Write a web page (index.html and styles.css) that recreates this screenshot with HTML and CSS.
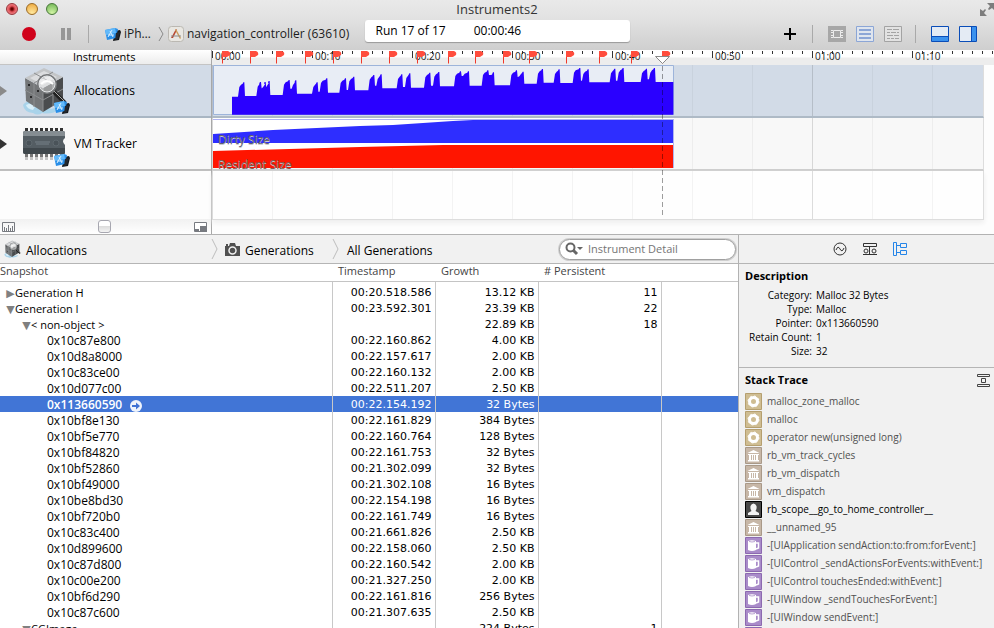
FILE: index.html
```
<!DOCTYPE html>
<html lang="en">
<head>
<meta charset="utf-8">
<title>Instruments2</title>
<link rel="stylesheet" href="styles.css">
</head>
<body>
<svg class="defs" aria-hidden="true">
  <defs>
    <symbol id="phone" viewBox="0 0 16 14">
      <path d="M10 4l5-1 1 2-2 8-6 1z" fill="#15181c"/>
      <path d="M0 3l10-2 3 1-2 9-9 2z" fill="#2a8fe8"/>
      <path d="M0 3l10-2 1 5-10 2z" fill="#62b9fa"/>
      <path d="M3 10l4-7M5 4l3 6M3 8h6" stroke="#d7efff" fill="none"/>
      <path d="M11 6l4-1-2 7-3 1z" fill="#24282e"/>
    </symbol>
    <symbol id="cube" viewBox="0 0 48 48">
      <path d="M1 38q4-5 12-4l16 8q8-3 9 0-8 6-18 4-4 3-9 0-9-1-10-8z" fill="#a9d3ea"/>
      <path d="M4 38q5-3 10 0l-3 5q-6-1-7-5z" fill="#d9eff9"/>
      <path d="M3 11L21 21V45L4 34z" fill="#747678"/>
      <path d="M21 21L41 10V33L21 45z" fill="#4a4c4e"/>
      <path d="M3 11L22 1 41 10 21 21z" fill="#c3c5c7"/>
      <path d="M8 11l14-7 13 6-14 8z" fill="#dcdddf"/>
      <path d="M12 6l18 10M31 5L12 16M3 23l18 10 20-11M12 16v24M31 15v24M21 21v24" stroke="#8c8e90" fill="none"/>
      <circle cx="7" cy="18" r="1" fill="#111"/><circle cx="9" cy="30" r="1" fill="#111"/><circle cx="16" cy="24" r="1" fill="#111"/>
      <path d="M32 25l11 11" stroke="#222" stroke-width="4"/>
      <path d="M32 24l10 10" stroke="#aaa" stroke-width="1"/>
      <circle cx="25" cy="17" r="9" fill="#fff" fill-opacity=".45" stroke="#77797b" stroke-width="2"/>
      <circle cx="25" cy="17" r="8" fill="none" stroke="#e4e6e8" stroke-width="1"/>
      <path d="M19 17q6-6 12 0" stroke="#fff" stroke-width="2" fill="none"/>
    </symbol>
    <symbol id="chip" viewBox="0 0 44 34">
      <path d="M3 31h37" stroke="#c4c4c4" stroke-width="4" stroke-dasharray="3 2"/>
      <path d="M3 3h38" stroke="#333" stroke-width="4" stroke-dasharray="3 2"/>
      <path d="M3 28h38" stroke="#777" stroke-width="4" stroke-dasharray="3 2"/>
      <path d="M3 4h38q2 0 2 2v5q-4 3 0 7v8q0 1-2 1H3q-2 0-2-2V6q0-2 2-2z" fill="#545d63"/>
      <path d="M3 4h38q2 0 2 2v3H1V6q0-2 2-2z" fill="#858d92"/>
      <path d="M1 21h42v5q0 1-2 1H3q-2 0-2-2z" fill="#3f474c"/>
      <circle cx="7" cy="16" r="3" fill="#4a5359" stroke="#5f696f"/>
      <circle cx="34" cy="16" r="3" fill="#4a5359" stroke="#5f696f"/>
      <path d="M13 15h15M14 17h13" stroke="#77828a"/>
    </symbol>
    <symbol id="gear" viewBox="0 0 17 17">
      <path d="M.5.5h16v16H.5z" fill="#cfbd92" stroke="#b59f6f"/>
      <circle cx="8.500" cy="8.500" r="4" fill="none" stroke="#fff" stroke-width="3"/>
      <circle cx="8.500" cy="8.500" r="5.500" fill="none" stroke="#fff" stroke-width="1" stroke-dasharray="2 2.300"/>
    </symbol>
    <symbol id="bank" viewBox="0 0 17 17">
      <path d="M.5.5h16v16H.5z" fill="#c7b7a7" stroke="#a99988"/>
      <path d="M2.500 6L8.500 3l6 3zM3 7h11v1H3zM4 8h2v5H4zM7 8h1v5H7zM9 8h1v5H9zM11 8h2v5h-2zM3 13h11v1.500H3z" fill="#fff"/>
    </symbol>
    <symbol id="person" viewBox="0 0 17 17">
      <path d="M.5.5h16v16H.5z" fill="#484848" stroke="#000"/>
      <path d="M3 14v-2l3.500-2Q5 8 5.500 5q1-2.500 3-2.500t3 2.500q.5 3-1 5l3.500 2v2z" fill="#f2f2f2"/>
    </symbol>
    <symbol id="mug" viewBox="0 0 17 17">
      <path d="M.5.5h16v16H.5z" fill="#a98bc9" stroke="#8c69b0"/>
      <path d="M3 4q4-1.500 8 0v9q-4 2-8 0z" fill="#fff"/>
      <path d="M11 6h2.500v5L11 12" fill="none" stroke="#fff" stroke-width="1.500"/>
      <path d="M4 4.500q3 1 6 0" stroke="#bba5d3" fill="none"/>
    </symbol>
  </defs>
</svg>

<header class="titlebar">
  <div class="lights">
    <button class="light close" aria-label="Close"></button>
    <button class="light mini" aria-label="Minimize"></button>
    <button class="light zoom" aria-label="Zoom"></button>
  </div>
  <h1>Instruments2</h1>
  <button class="full" aria-label="Full screen"><svg width="14" height="15" viewBox="0 0 14 15"><path d="M7 1h7v7l-2-2-3 2-1-1 2-3zM0 7l3 2 2-2 1 1-2 3 3 3H0z" fill="#7d7d7d"/></svg></button>
</header>

<div class="toolbar">
  <div class="tools-left">
    <button aria-label="Record" class="record"></button>
    <button aria-label="Pause" class="pause"></button>
    <span class="divider"></span>
    <button class="target"><svg width="16" height="14"><use href="#phone"/></svg>iPh…</button>
    <svg class="chev" width="6" height="16" viewBox="0 0 6 16"><path d="M1 1l4 7-4 7" fill="none" stroke="#8a8a8a"/></svg>
    <button class="target"><svg width="16" height="16" viewBox="0 0 16 16"><rect x=".5" y=".5" width="15" height="15" rx="3" fill="#e9e7e2" stroke="#bbb8b2"/><path d="M3 12L8 3l1 1-4 8z" fill="#b8452f"/><path d="M8 3l5 9-1 1-5-9z" fill="#c99c5a"/><path d="M3 10h10" stroke="#8d8d8d"/></svg>navigation_controller (63610)</button>
  </div>
  <div class="status"><span>Run 17 of 17</span><span>00:00:46</span></div>
  <div class="tools-right">
    <button class="add" aria-label="Add instrument"><svg width="12" height="12" viewBox="0 0 12 12"><path d="M6 0v12M0 6h12" stroke="#000" stroke-width="2"/></svg></button>
    <span class="divider"></span>
    <button aria-label="CPU strategy"><svg width="18" height="16" viewBox="0 0 18 16"><path d="M0 0h18v16H0z" fill="#a7a7a7"/><path d="M5.500 4.500h7v7h-7z" fill="#a7a7a7" stroke="#ececec"/><path d="M3 4.500h2M3 6.500h2M3 9.500h2M3 11.500h2M13 4.500h2M13 6.500h2M13 9.500h2M13 11.500h2" stroke="#ececec"/></svg></button>
    <button aria-label="Instruments strategy"><svg width="18" height="16" viewBox="0 0 18 16"><path d="M.5.5h17v15H.5z" fill="#dfe5ee" stroke="#8ca6d6"/><path d="M3 4h12M3 8h12M3 12h12" stroke="#8ca6d6" stroke-width="2"/></svg></button>
    <button aria-label="Threads strategy"><svg width="18" height="16" viewBox="0 0 18 16"><path d="M.5.5h17v15H.5z" fill="#e2e2e2" stroke="#a3a3a3"/><path d="M3 3.500h5m1 0h6M3 6.500h3m1 0h5m1 0h2M3 9.500h6m1 0h5M3 12.500h3m1 0h3m1 0h4" stroke="#a3a3a3"/></svg></button>
    <span class="divider"></span>
    <button aria-label="Detail pane"><svg width="18" height="16" viewBox="0 0 18 16"><path d="M.5.5h17v15H.5z" fill="#e4ebf4" stroke="#0a4db8"/><path d="M1 10h16v5H1z" fill="#3b92ee"/><path d="M1 10.500h16" stroke="#0a4db8"/></svg></button>
    <button aria-label="Extended detail"><svg width="18" height="16" viewBox="0 0 18 16"><path d="M.5.5h17v15H.5z" fill="#e4ebf4" stroke="#0a4db8"/><path d="M12 1h5v14h-5z" fill="#3b92ee"/><path d="M12.500 1v14" stroke="#0a4db8"/></svg></button>
  </div>
</div>

<section class="timeline">
  <div class="instruments">
    <div class="inst-head">Instruments</div>
    <div class="inst sel">
      <button class="disc" aria-label="Expand Allocations"></button>
      <span class="pic"><svg width="48" height="48"><use href="#cube"/></svg><svg class="badge" width="16" height="14"><use href="#phone"/></svg></span>
      <span>Allocations</span>
    </div>
    <div class="inst">
      <button class="disc dark" aria-label="Expand VM Tracker"></button>
      <span class="pic"><svg width="44" height="34"><use href="#chip"/></svg><svg class="badge" width="16" height="14"><use href="#phone"/></svg></span>
      <span>VM Tracker</span>
    </div>
    <div class="inst-foot">
      <button aria-label="Track scale"><svg width="13" height="10" viewBox="0 0 13 10"><path d="M.5.5h12v9H.5zM2.500 9V5M4.500 9V6M6.500 9V3M8.500 9V6M10.500 9V4" fill="none" stroke="#777a80"/></svg></button>
      <button class="knob" aria-label="Zoom slider"></button>
      <button aria-label="Snap"><svg width="13" height="10" viewBox="0 0 13 10"><path d="M.5.5h12v9H.5z" fill="#fff" stroke="#777a80"/><path d="M6 4h7v6H6zM1 7h4v3H1z" fill="#777a80"/></svg></button>
    </div>
  </div>
  <div class="tracks">
    <div class="ruler"><span>00:00</span><span>00:10</span><span>00:20</span><span>00:30</span><span>00:40</span><span>00:50</span><span>01:00</span><span>01:10</span></div>
    <div class="lane sel">
      <svg width="461" height="50" viewBox="0 0 461 50">
        <path d="M.5.5h460v49H.5z" fill="#e8edf5" stroke="#9db4da"/>
        <path id="heap" transform="translate(-213 -65) scale(.33333)" fill="#2a00ff"/>
      </svg>
    </div>
    <div class="lane vm">
      <svg width="461" height="50" viewBox="0 0 461 50">
        <path d="M0 0h461v50H0z" fill="#fff"/>
        <path d="M0 16L60 12 147 8 180 7 240 3 260 2H461V25H0z" fill="#2e2eff"/>
        <path d="M0 33L147 29 230 27H461V50H0z" fill="#ff1500"/>
        <path d="M0 1.500h461M460.500 1v49" stroke="#b0b4f0" fill="none"/>
      </svg>
      <span class="tag dirty">Dirty Size</span><span class="tag resident">Resident Size</span>
    </div>
    <div class="lane blank"></div>
    <svg class="marks" width="470" height="170" viewBox="0 0 470 170">
      <g id="flags" stroke="#f0392b" fill="#ff4d3d"></g>
      <path d="M450.500 16v150" stroke="#000" stroke-opacity=".38" stroke-dasharray="5 3"/>
      <path d="M443.500 6.500h14l-7 7z" fill="#fff" stroke="#888"/>
    </svg>
  </div>
</section>

<main>
  <section class="detail">
    <nav class="crumbs">
      <a href="#" class="c1"><svg width="18" height="18"><use href="#cube"/></svg><span>Allocations</span></a>
      <svg class="sep" width="7" height="20" viewBox="0 0 7 20"><path d="M1 0l5 10-5 10" fill="none" stroke="#bdbdbd"/></svg>
      <a href="#" class="c2"><svg width="15" height="13" viewBox="0 0 15 13"><path d="M0 3h1V1h2v2h1l1-3h5l1 3h4v10H0z" fill="#505050"/><circle cx="7.500" cy="7.500" r="3.500" fill="#505050" stroke="#f1f1f1" stroke-width="1.500"/></svg><span>Generations</span></a>
      <svg class="sep" width="7" height="20" viewBox="0 0 7 20"><path d="M1 0l5 10-5 10" fill="none" stroke="#bdbdbd"/></svg>
      <a href="#" class="c3"><span>All Generations</span></a>
      <label class="search"><svg width="18" height="14" viewBox="0 0 18 14"><circle cx="5.500" cy="5.500" r="4" fill="none" stroke="#666" stroke-width="2"/><path d="M8 8l4 4" stroke="#666" stroke-width="3"/><path d="M12 5h6l-3 3z" fill="#666"/></svg><input type="search" placeholder="Instrument Detail" aria-label="Instrument Detail"></label>
    </nav>
    <table>
      <colgroup><col class="w1"><col class="w2"><col class="w2"><col class="w3"><col></colgroup>
      <thead><tr><th>Snapshot</th><th>Timestamp</th><th>Growth</th><th># Persistent</th><th></th></tr></thead>
      <tbody>
        <tr class="gap"><td></td><td></td><td></td><td></td><td></td></tr>
        <tr><td class="g"><button class="tri">▶</button>Generation H</td><td>00:20.518.586</td><td>13.12 KB</td><td>11</td><td></td></tr>
        <tr><td class="g"><button class="tri">▼</button>Generation I</td><td>00:23.592.301</td><td>23.39 KB</td><td>22</td><td></td></tr>
        <tr><td class="g in"><button class="tri">▼</button>&lt; non-object &gt;</td><td></td><td>22.89 KB</td><td>18</td><td></td></tr>
        <tr><td>0x10c87e800</td><td>00:22.160.862</td><td>4.00 KB</td><td></td><td></td></tr>
        <tr><td>0x10d8a8000</td><td>00:22.157.617</td><td>2.00 KB</td><td></td><td></td></tr>
        <tr><td>0x10c83ce00</td><td>00:22.160.132</td><td>2.00 KB</td><td></td><td></td></tr>
        <tr><td>0x10d077c00</td><td>00:22.511.207</td><td>2.50 KB</td><td></td><td></td></tr>
        <tr class="on"><td>0x113660590<a href="#" class="go" aria-label="Show details"><svg width="12" height="12" viewBox="0 0 12 12"><circle cx="6" cy="6" r="6" fill="#eef3fb"/><path d="M2 5h4V2.500L10 6 6 9.500V7H2z" fill="#3f72d4"/></svg></a></td><td>00:22.154.192</td><td>32 Bytes</td><td></td><td></td></tr>
        <tr><td>0x10bf8e130</td><td>00:22.161.829</td><td>384 Bytes</td><td></td><td></td></tr>
        <tr><td>0x10bf5e770</td><td>00:22.160.764</td><td>128 Bytes</td><td></td><td></td></tr>
        <tr><td>0x10bf84820</td><td>00:22.161.753</td><td>32 Bytes</td><td></td><td></td></tr>
        <tr><td>0x10bf52860</td><td>00:21.302.099</td><td>32 Bytes</td><td></td><td></td></tr>
        <tr><td>0x10bf49000</td><td>00:21.302.108</td><td>16 Bytes</td><td></td><td></td></tr>
        <tr><td>0x10be8bd30</td><td>00:22.154.198</td><td>16 Bytes</td><td></td><td></td></tr>
        <tr><td>0x10bf720b0</td><td>00:22.161.749</td><td>16 Bytes</td><td></td><td></td></tr>
        <tr><td>0x10c83c400</td><td>00:21.661.826</td><td>2.50 KB</td><td></td><td></td></tr>
        <tr><td>0x10d899600</td><td>00:22.158.060</td><td>2.50 KB</td><td></td><td></td></tr>
        <tr><td>0x10c87d800</td><td>00:22.160.542</td><td>2.00 KB</td><td></td><td></td></tr>
        <tr><td>0x10c00e200</td><td>00:21.327.250</td><td>2.00 KB</td><td></td><td></td></tr>
        <tr><td>0x10bf6d290</td><td>00:22.161.816</td><td>256 Bytes</td><td></td><td></td></tr>
        <tr><td>0x10c87c600</td><td>00:21.307.635</td><td>2.50 KB</td><td></td><td></td></tr>
        <tr><td class="g in"><button class="tri">▼</button>CGImage</td><td></td><td>224 Bytes</td><td>1</td><td></td></tr>
      </tbody>
    </table>
  </section>

  <aside>
    <div class="tabs">
      <button aria-label="Record settings"><svg width="14" height="14" viewBox="0 0 14 14"><circle cx="7" cy="7" r="6" fill="none" stroke="#333"/><path d="M3 8q2-5 4-1t4-1" fill="none" stroke="#333"/></svg></button>
      <button aria-label="Display settings"><svg width="14" height="14" viewBox="0 0 14 14"><path d="M.5 1.500h13v3H.5zM6.500 5v8M0 12.500h14" fill="none" stroke="#333"/><circle cx="3" cy="9" r="2" fill="none" stroke="#333"/><circle cx="11" cy="9" r="2" fill="none" stroke="#333"/></svg></button>
      <button aria-label="Extended detail"><svg width="14" height="14" viewBox="0 0 14 14"><path d="M.5.5h3v13h-3zM7.500 1.500h6v4h-6zM7.500 8.500h6v4h-6zM4 3.500h3M4 10.500h3" fill="none" stroke="#2585e8"/></svg></button>
    </div>
    <section class="desc">
      <h2>Description</h2>
      <dl>
        <dt>Category:</dt><dd>Malloc 32 Bytes</dd>
        <dt>Type:</dt><dd>Malloc</dd>
        <dt>Pointer:</dt><dd>0x113660590</dd>
        <dt>Retain Count:</dt><dd>1</dd>
        <dt>Size:</dt><dd>32</dd>
      </dl>
    </section>
    <section class="stack">
      <div class="stack-head"><h2>Stack Trace</h2><button aria-label="Compress stack"><svg width="13" height="13" viewBox="0 0 13 13"><path d="M.5 2.500v-2h12v2zM.5 12.500v-2h12v2zM4.500 4.500h4v4h-4z" fill="none" stroke="#444"/></svg></button></div>
      <ul>
        <li><svg><use href="#gear"/></svg>malloc_zone_malloc</li>
        <li><svg><use href="#gear"/></svg>malloc</li>
        <li><svg><use href="#gear"/></svg>operator new(unsigned long)</li>
        <li><svg><use href="#bank"/></svg>rb_vm_track_cycles</li>
        <li><svg><use href="#bank"/></svg>rb_vm_dispatch</li>
        <li><svg><use href="#bank"/></svg>vm_dispatch</li>
        <li class="me"><svg><use href="#person"/></svg>rb_scope__go_to_home_controller__</li>
        <li><svg><use href="#bank"/></svg>__unnamed_95</li>
        <li><svg><use href="#mug"/></svg>-[UIApplication sendAction:to:from:forEvent:]</li>
        <li><svg><use href="#mug"/></svg>-[UIControl _sendActionsForEvents:withEvent:]</li>
        <li><svg><use href="#mug"/></svg>-[UIControl touchesEnded:withEvent:]</li>
        <li><svg><use href="#mug"/></svg>-[UIWindow _sendTouchesForEvent:]</li>
        <li><svg><use href="#mug"/></svg>-[UIWindow sendEvent:]</li>
        <li><svg><use href="#mug"/></svg></li>
      </ul>
    </section>
  </aside>
</main>
<script src="app.js"></script>
</body>
</html>
```
FILE: app.js
```
// Generation marks along the ruler, in pixels from the start of the track.
const marks = [10, 38, 64, 93, 121, 149, 177, 205, 236, 263, 291, 317, 354, 387, 419, 450];
document.getElementById("flags").innerHTML = marks
  .map((x) => `<path d="M${x + 0.5} 1.500v12" fill="none"/><path stroke="none" d="M${x} 1h6q3 1 2 4l-3 2H${x}z"/>`)
  .join("");

// Heap size: bursts of one or two spikes [from, to, top], the dip between them, and the level after.
const bursts = [
  { spikes: [[714, 733, 247]], dip: 280, level: 288 },
  { spikes: [[769, 783, 246], [786, 797, 246], [797, 809, 243]], dip: 265, level: 285 },
  { spikes: [[848, 869, 240], [875, 889, 241]], dip: 266, level: 281 },
  { spikes: [[936, 953, 247], [959, 982, 235]], dip: 275, level: 278 },
  { spikes: [[1018, 1038, 235], [1044, 1063, 230]], dip: 270, level: 271 },
  { spikes: [[1105, 1123, 225], [1129, 1145, 223]], dip: 257, level: 265 },
  { spikes: [[1190, 1207, 223], [1215, 1231, 220]], dip: 261, level: 263 },
  { spikes: [[1272, 1291, 218], [1299, 1318, 216]], dip: 257, level: 259 },
  { spikes: [[1362, 1383, 214], [1385, 1407, 214]], dip: 228, level: 257 },
  { spikes: [[1445, 1465, 211], [1467, 1482, 217]], dip: 225, level: 256 },
  { spikes: [[1530, 1551, 211], [1554, 1571, 215]], dip: 231, level: 251 },
  { spikes: [[1610, 1629, 207]], dip: 248, level: 248 },
  { spikes: [[1661, 1679, 208]], dip: 249, level: 249 },
  { spikes: [[1718, 1741, 204], [1746, 1766, 208]], dip: 242, level: 247 },
  { spikes: [[1829, 1846, 206], [1852, 1871, 204]], dip: 242, level: 246 },
  { spikes: [[1922, 1941, 206], [1947, 1965, 204]], dip: 238, level: 246 },
];
let level = 290;
let d = "M696 344V290";
for (const b of bursts) {
  b.spikes.forEach(([from, to, top], i) => {
    const start = i ? b.dip : level;
    const end = i === b.spikes.length - 1 ? b.level : b.dip;
    d += `L${from} ${start} ${from + 4} ${Math.min(start, top + 14)} ${from + 9} ${top + 7} ${to - 5} ${top + 4} ${to - 3} ${top} ${to} ${top} ${to + 2} ${end}`;
  });
  level = b.level;
}
document.getElementById("heap").setAttribute("d", `${d}H2020V344z`);
```
FILE: styles.css
```
* { box-sizing: border-box; }
html, body { height: 100%; }
body {
  margin: 0;
  display: flex;
  flex-direction: column;
  overflow: hidden;
  background: #f1f1f1;
  color: #000;
  font: 12px/16px "Open Sans", "Noto Sans", sans-serif;
}
.defs { position: absolute; width: 0; height: 0; }
svg { display: block; flex: none; }
button { border: 0; padding: 0; margin: 0; background: none; font: inherit; color: inherit; display: block; flex: none; }
h1, h2, ul, dl, dd { margin: 0; padding: 0; }
a { color: inherit; text-decoration: none; }

/* Window chrome */
.titlebar {
  flex: none;
  height: 18px;
  display: grid;
  grid-template-columns: 1fr auto 1fr;
  align-items: center;
  background: linear-gradient(#e9e9e9, #e2e2e2);
}
.titlebar h1 { font-size: 13px; font-weight: 400; line-height: 18px; color: #333; }
.lights { display: flex; gap: 8px; padding-left: 6px; }
.light { width: 12px; height: 12px; border-radius: 50%; border: 1px solid #666; }
.close { background: radial-gradient(circle at 50% 50%, #600 1px, #e2535a 3px, #f7a9a9); border-color: #99343a; }
.mini { background: radial-gradient(circle at 50% 90%, #ffe9a0, #eda63a); border-color: #9b6a25; }
.zoom { background: radial-gradient(circle at 50% 90%, #d3f5a6, #6db453); border-color: #48763a; }
.full { justify-self: end; }

.toolbar {
  flex: none;
  height: 32px;
  display: grid;
  grid-template-columns: 1fr 265px 1fr;
  gap: 10px;
  align-items: center;
  background: linear-gradient(#e2e2e2, #cfcfcf);
}
.tools-left, .tools-right { display: flex; align-items: center; }
.tools-left { padding-left: 22px; min-width: 0; }
.record { width: 14px; height: 14px; border-radius: 50%; background: #d0021b; }
.pause { width: 10px; height: 12px; margin-left: 25px; border: solid #969696; border-width: 0 4px; }
.divider { width: 1px; height: 18px; background: #a9a9a9; }
.tools-left .divider { margin: 0 16px 0 17px; }
.target { display: flex; align-items: center; gap: 3px; color: #1c1c1c; white-space: nowrap; }
.chev { margin: 0 4px 0 7px; }
.status {
  display: flex;
  gap: 28px;
  align-self: start;
  margin-top: 2px;
  height: 22px;
  padding-left: 11px;
  border-radius: 3px;
  background: #fff;
  box-shadow: 0 1px 1px #999;
  line-height: 22px;
}
.tools-right { justify-content: flex-end; gap: 10px; padding-right: 17px; }
.tools-right .divider { margin: 0 5px 0 3px; }
.add { margin-right: 3px; }

/* Timeline */
.timeline { flex: none; display: flex; height: 185px; background: #fdfdfd; border-bottom: 1px solid #b2b2b2; }
.instruments { width: 212px; flex: none; display: flex; flex-direction: column; border-right: 1px solid #a8a8a8; }
.inst-head {
  height: 15px;
  padding-left: 73px;
  font-size: 11px;
  line-height: 14px;
  background: linear-gradient(#fff, #ececec);
  border-bottom: 1px solid #c4c4c4;
}
.inst { height: 53px; display: flex; align-items: center; background: #f8f8f8; border-bottom: 2px solid #bfbfbf; }
.inst.sel { background: #d2dbe7; border-bottom-color: #a9b6c3; }
.disc { width: 0; height: 0; border: solid transparent; border-width: 5px 0 5px 7px; border-left-color: #8a8a8a; }
.disc.dark { border-left-color: #333; }
.pic { position: relative; width: 48px; height: 48px; display: flex; align-items: center; margin: 0 4px 0 15px; }
.badge { position: absolute; right: 0; bottom: 1px; }
.inst-foot {
  margin-top: auto;
  height: 15px;
  padding: 0 4px 0 2px;
  display: flex;
  justify-content: space-between;
  align-items: center;
  background: linear-gradient(#f1f1f1, #fff);
}
.knob { width: 13px; height: 13px; border: 1px solid #a7a7b0; border-radius: 3px; background: linear-gradient(#fff 45%, #ddd 50%, #f3f3f3); }

.tracks { position: relative; flex: 1; min-width: 0; }
.ruler {
  height: 15px;
  display: grid;
  grid-template-columns: repeat(8, 100px);
  overflow: hidden;
  font-size: 10px;
  line-height: 13px;
  color: #222;
  background:
    repeating-linear-gradient(90deg, #333 0 1px, transparent 1px 100px) 0 1px / 100% 7px no-repeat,
    repeating-linear-gradient(90deg, #333 0 1px, transparent 1px 10px) 0 1px / 100% 3px no-repeat,
    linear-gradient(#fff 7px, #ededed 8px);
}
.ruler span { padding-left: 3px; }
.lane {
  position: relative;
  height: 53px;
  margin-right: 10px;
  padding-left: 1px;
  border-right: 1px solid #ddd;
  border-bottom: 2px solid #cdcdcd;
  background:
    linear-gradient(90deg, #00000018 1px, transparent 1px) 0 0 / 600px 100%,
    linear-gradient(90deg, #0000000b 1px, transparent 1px) 0 0 / 60px 100% #f8f8f8;
}
.lane.sel { background-color: #d2dbe7; border-bottom-color: #aebac6; }
.lane.blank { height: 49px; background-color: #fefefe; border-bottom: 1px solid #ddd; box-shadow: 0 3px 5px #eee; }
.tag { position: absolute; left: 6px; line-height: 14px; color: #62626e; text-shadow: 0 1px 0 #c9c9d2; }
.dirty { top: 15px; }
.resident { top: 40px; color: #84564f; }
.marks { position: absolute; left: 0; top: 0; }

/* Detail pane */
main { flex: 1; min-height: 0; display: flex; }
.detail { flex: 1; min-width: 0; overflow: hidden; background: #fff; }
.crumbs { height: 29px; display: flex; align-items: center; background: #f1f1f1; border-bottom: 1px solid #b5b5b5; padding: 0 2px 0 4px; }
.crumbs a { display: flex; align-items: center; gap: 4px; white-space: nowrap; }
.crumbs a span { padding-top: 3px; }
.c1 { width: 207px; }
.c2 { width: 114px; padding-left: 7px; }
.crumbs .c2 { gap: 5px; }
.c3 { padding-left: 8px; }
.search {
  margin-left: auto;
  width: 177px;
  height: 21px;
  display: flex;
  align-items: center;
  gap: 5px;
  padding-left: 5px;
  border: 1px solid #a0a0a0;
  border-radius: 11px;
  background: #fff;
  box-shadow: 0 0 0 1px #cfcfcf;
}
.search input { width: 100%; min-width: 0; padding: 0; border: 0; outline: 0; background: none; font: inherit; font-size: 11px; }
.search input::placeholder { color: #757575; }

table { width: 100%; border-collapse: collapse; table-layout: fixed; }
.w1 { width: 332px; }
.w2 { width: 103px; }
.w3 { width: 123px; }
th {
  height: 17px;
  padding: 0 0 2px 6px;
  text-align: left;
  font-size: 11px;
  line-height: 14px;
  font-weight: 400;
  color: #444;
  border-bottom: 1px solid #c4c4c4;
}
th:first-child { padding-left: 0; }
td {
  height: 16px;
  padding: 1px 3px 0 0;
  border-right: 1px solid #c8c8c8;
  text-align: right;
  font: 11px/15px "DejaVu Sans", sans-serif;
  white-space: nowrap;
}
td:last-child { border-right: 0; }
td:first-child { padding-left: 47px; text-align: left; font: 12px/15px "Open Sans", sans-serif; }
td:first-child.g { padding-left: 6px; font-size: 11px; }
td:first-child.in { padding-left: 22px; }
tr.gap td { height: 3px; padding: 0; line-height: 3px; }
.tri { display: inline-block; width: 9px; color: #808080; font: 11px/12px "DejaVu Sans", sans-serif; }
.on td { background: #4175d6; color: #fff; background-clip: padding-box; }
.on td:first-child { font-weight: 600; }
.go { display: inline-block; margin-left: 8px; vertical-align: middle; }

/* Inspector */
aside { width: 256px; flex: none; border-left: 1px solid #b2b2b2; overflow: hidden; font-size: 10px; }
.tabs { height: 29px; display: flex; justify-content: center; gap: 16px; padding-left: 6px; align-items: center; border-bottom: 1px solid #b5b5b5; }
h2 { font-size: 11px; line-height: 16px; font-weight: 700; }
.desc { height: 104px; padding: 4px 6px 0; border-bottom: 1px solid #b5b5b5; }
dl { display: grid; grid-template-columns: 67px 1fr; column-gap: 4px; line-height: 14px; padding-top: 4px; }
dt { text-align: right; white-space: nowrap; }
.stack-head { display: flex; justify-content: space-between; align-items: center; height: 24px; padding: 0 4px 0 6px; }
ul { list-style: none; }
li { height: 18px; display: flex; align-items: center; gap: 5px; padding-left: 6px; line-height: 18px; color: #505050; white-space: nowrap; }
li svg { width: 17px; height: 17px; }
.me { color: #000; }
```
